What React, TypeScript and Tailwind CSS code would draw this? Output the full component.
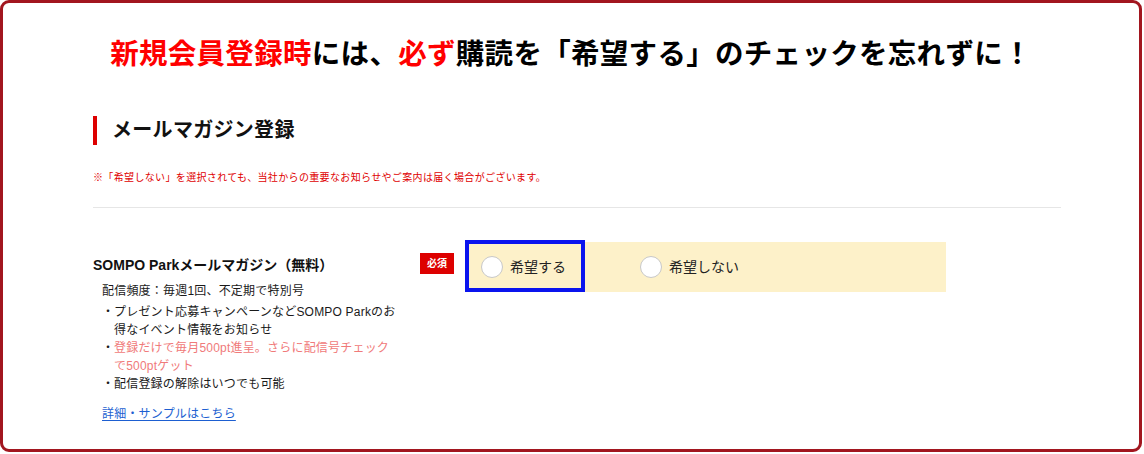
export default function App() {
  const font = { fontFamily: '"Liberation Sans", "Noto Sans CJK JP", sans-serif' };

  return (
    <div className="w-[1144px] h-[454px] bg-white" style={font}>
      <div className="w-[1142px] h-[452px] border-[3px] border-[#a2161f] rounded-[9px] overflow-hidden">
        {/* headline */}
        <h1 className="pt-[31px] text-center text-[28.5px] leading-[40px] font-bold text-black tracking-[0.3px]">
          <span className="text-[#ff0000]">新規会員登録時</span>には、<span className="text-[#ff0000]">必ず</span>購読を「希望する」のチェックを忘れずに！
        </h1>

        <div className="ml-[90px] w-[968px]">
          {/* section title */}
          <div className="mt-[42px] flex items-center gap-[15px]">
            <div className="w-[4px] h-[29px] bg-[#dd0000]" />
            <h2 className="text-[20px] leading-[29px] font-bold text-[#111] tracking-[0.3px]">メールマガジン登録</h2>
          </div>

          <p className="mt-[25px] text-[10px] leading-[16px] text-[#e00000] tracking-[0.35px]">
            ※「希望しない」を選択されても、当社からの重要なお知らせやご案内は届く場合がございます。
          </p>

          <div className="mt-[21px] border-t border-[#e6e6e6]" />

          {/* form row */}
          <div className="mt-[34px] flex items-start">
            <div className="w-[327px]">
              <div className="mt-[13px] text-[14px] leading-[20px] font-bold text-[#111]">
                SOMPO Parkメールマガジン（無料）
              </div>
              <div className="mt-[7px] pl-[9px] text-[12px] leading-[18px] text-[#1a1a1a] tracking-[0.2px]">
                <p>配信頻度：毎週1回、不定期で特別号</p>
                <ul className="mt-[3px] whitespace-nowrap">
                  <li className="flex">
                    <span className="w-[12px] shrink-0">・</span>
                    <span>
                      プレゼント応募キャンペーンなどSOMPO Parkのお
                      <br />
                      得なイベント情報をお知らせ
                    </span>
                  </li>
                  <li className="flex">
                    <span className="w-[12px] shrink-0">・</span>
                    <span className="text-[#f07a7a]">
                      登録だけで毎月500pt進呈。さらに配信号チェック
                      <br />
                      で500ptゲット
                    </span>
                  </li>
                  <li className="flex">
                    <span className="w-[12px] shrink-0">・</span>
                    <span>配信登録の解除はいつでも可能</span>
                  </li>
                </ul>
                <a href="#" className="mt-[12px] block text-[#1d5fd1] underline underline-offset-2">
                  詳細・サンプルはこちら
                </a>
              </div>
            </div>

            <div className="mt-[11px] w-[34px] h-[21px] bg-[#dd0000] text-white text-[10px] font-bold flex items-center justify-center">
              必須
            </div>

            <div className="relative ml-[11px] w-[481px] h-[50px] bg-[#fdf1c9] flex items-center pl-[16px]">
              <label className="w-[159px] flex items-center gap-[7px] text-[14px] text-[#222]">
                <span className="w-[22px] h-[22px] rounded-full bg-white border-[1.5px] border-[#c8c8c8]" />
                希望する
              </label>
              <label className="flex items-center gap-[7px] text-[14px] text-[#222]">
                <span className="w-[22px] h-[22px] rounded-full bg-white border-[1.5px] border-[#c8c8c8]" />
                希望しない
              </label>
              {/* highlight annotation */}
              <div className="absolute left-0 top-[-2px] w-[120px] h-[52px] border-[4px] border-[#0a14ee]" />
            </div>
          </div>
        </div>
      </div>
    </div>
  );
}
